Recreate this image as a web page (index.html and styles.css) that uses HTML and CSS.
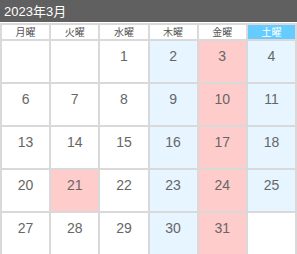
FILE: index.html
```html
<!DOCTYPE html>
<html lang="ja">
<head>
<meta charset="utf-8">
<link rel="stylesheet" href="styles.css">
</head>
<body>
<div class="cal">
  <div class="title">2023年3月</div>
  <div class="grid">
    <div class="dow">月曜</div>
    <div class="dow">火曜</div>
    <div class="dow">水曜</div>
    <div class="dow">木曜</div>
    <div class="dow">金曜</div>
    <div class="dow sat">土曜</div>

    <div class="day"></div>
    <div class="day"></div>
    <div class="day">1</div>
    <div class="day blue">2</div>
    <div class="day pink">3</div>
    <div class="day blue">4</div>

    <div class="day">6</div>
    <div class="day">7</div>
    <div class="day">8</div>
    <div class="day blue">9</div>
    <div class="day pink">10</div>
    <div class="day blue">11</div>

    <div class="day">13</div>
    <div class="day">14</div>
    <div class="day">15</div>
    <div class="day blue">16</div>
    <div class="day pink">17</div>
    <div class="day blue">18</div>

    <div class="day">20</div>
    <div class="day pink">21</div>
    <div class="day">22</div>
    <div class="day blue">23</div>
    <div class="day pink">24</div>
    <div class="day blue">25</div>

    <div class="day">27</div>
    <div class="day">28</div>
    <div class="day">29</div>
    <div class="day blue">30</div>
    <div class="day pink">31</div>
    <div class="day"></div>
  </div>
</div>
</body>
</html>
```
FILE: styles.css
```css
html, body {
  margin: 0;
  padding: 0;
  background: #fff;
}
body {
  font-family: "Liberation Sans", "Noto Sans CJK JP", sans-serif;
  color: #555;
}
.cal {
  width: 297px;
}
.title {
  height: 22px;
  background: #606060;
  color: #fff;
  font-size: 13px;
  line-height: 23px;
  padding-left: 4px;
  box-sizing: border-box;
  margin-bottom: 1px;
}
.grid {
  display: grid;
  grid-template-columns: repeat(6, 1fr);
  grid-template-rows: 16px repeat(5, 43px);
  border: 1px solid #d9d9d9;
}
.dow, .day {
  border: 1px solid #d9d9d9;
  text-align: center;
}
.dow {
  font-family: "Noto Sans CJK JP", sans-serif;
  font-size: 10px;
  line-height: 14px;
  color: #555;
  background: #fff;
}
.dow.sat {
  background: #66ccff;
  color: #fff;
}
.day {
  font-size: 14px;
  padding-top: 7px;
  box-sizing: border-box;
  color: #666;
}
.blue {
  background: #e6f5ff;
}
.pink {
  background: #ffcccc;
}
```
